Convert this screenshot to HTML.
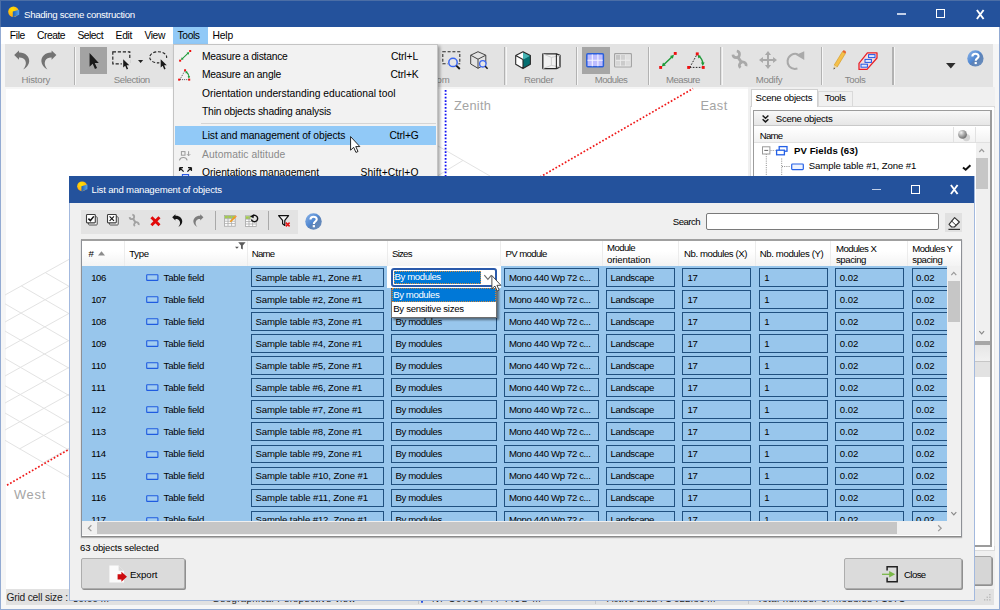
<!DOCTYPE html>
<html>
<head>
<meta charset="utf-8">
<title>Shading scene construction</title>
<style>
*{box-sizing:border-box;margin:0;padding:0}
html,body{width:1000px;height:610px;overflow:hidden;background:#fff}
body{font-family:"Liberation Sans",sans-serif;font-size:9.3px;color:#000;position:relative}
.abs{position:absolute}
.t{position:absolute;white-space:nowrap;line-height:1}
svg{position:absolute;overflow:visible}
.f{position:absolute;height:19px;border:1px solid #20507f}
.rows .t{transform:translateY(0.5px)}
.btn{position:absolute;background:#dbdbdb;border:1px solid #adadad;border-radius:2px;box-shadow:1px 1px 0 #8f8f8f}
</style>
</head>
<body>
<div class="abs" style="left:0px;top:0px;width:1000px;height:610px;background:#f6f6f6;border:1px solid #93abd3"></div>
<div class="abs" style="left:6px;top:89px;width:742px;height:500px;background:#fff;"></div>
<div class="abs" style="left:0px;top:0px;width:1000px;height:27px;background:#24529c;border-top:1px solid #4b6ea6;border-left:1px solid #4b6ea6"></div>
<svg style="left:8.0px;top:6.0px" width="13" height="12" viewBox="0 0 13 12"><defs><radialGradient id="s1" cx="0.4" cy="0.3" r="0.8"><stop offset="0" stop-color="#ffe400"/><stop offset="1" stop-color="#ff9a1c"/></radialGradient><linearGradient id="p2" x1="0" x2="1"><stop offset="0" stop-color="#1d62b6"/><stop offset="1" stop-color="#58a3ea"/></linearGradient></defs><circle cx="5.5" cy="5.7" r="5.3" fill="url(#s1)"/><path d="M4.8 5.6 L11.2 3.8 L11.2 8.8 L4.8 11.2 Z" fill="url(#p2)"/></svg>
<div class="t" style="left:24.0px;top:10.0px;font-size:9.70px;letter-spacing:-0.314px;color:#fff;">Shading scene construction</div>
<div class="abs" style="left:897px;top:13px;width:9px;height:2px;background:#c3d0e8;"></div>
<div class="abs" style="left:936px;top:9px;width:9px;height:9px;background:transparent;border:1px solid #fff"></div>
<svg style="left:975.5px;top:9.5px" width="8.5" height="9" viewBox="0 0 8.5 9"><path d="M0.9 0 L7.6 9 M7.6 0 L0.9 9" stroke="#fff" stroke-width="1.9" fill="none"/></svg>
<div class="abs" style="left:1px;top:27px;width:998px;height:17px;background:#fff;"></div>
<div class="abs" style="left:173px;top:27px;width:34.6px;height:17.2px;background:#91c9f7;"></div>
<div class="t" style="left:9.8px;top:31.0px;font-size:10.30px;letter-spacing:-0.349px;color:#000;">File</div>
<div class="t" style="left:37.0px;top:31.0px;font-size:10.30px;letter-spacing:-0.485px;color:#000;">Create</div>
<div class="t" style="left:77.5px;top:31.0px;font-size:10.30px;letter-spacing:-0.521px;color:#000;">Select</div>
<div class="t" style="left:115.6px;top:31.0px;font-size:10.30px;letter-spacing:-0.287px;color:#000;">Edit</div>
<div class="t" style="left:144.4px;top:31.0px;font-size:10.30px;letter-spacing:-0.385px;color:#000;">View</div>
<div class="t" style="left:177.6px;top:31.0px;font-size:10.30px;letter-spacing:-0.409px;color:#000;">Tools</div>
<div class="t" style="left:212.5px;top:31.0px;font-size:10.30px;letter-spacing:-0.171px;color:#000;">Help</div>
<div class="abs" style="left:5px;top:44px;width:988px;height:42.5px;background:#e3e3e3;"></div>
<svg style="left:13.5px;top:50.0px" width="15.6" height="20" viewBox="0 0 15.6 20"><path d="M0.2 4.9 L5 0.4 L5 2.5 C11 2.2 15.6 6.4 15.2 11.6 C15 14.8 12.6 17.8 9.2 19.6 C11.6 16.6 12.6 13.6 11.4 10.8 C10.2 8.2 7.8 7.3 5 7.4 L5 9.7 Z" fill="#737373"/></svg>
<svg style="left:41.3px;top:50.0px" width="15.6" height="20" viewBox="0 0 15.6 20"><g transform="translate(15.6 0) scale(-1 1)"><path d="M0.2 4.9 L5 0.4 L5 2.5 C11 2.2 15.6 6.4 15.2 11.6 C15 14.8 12.6 17.8 9.2 19.6 C11.6 16.6 12.6 13.6 11.4 10.8 C10.2 8.2 7.8 7.3 5 7.4 L5 9.7 Z" fill="#737373"/></g></svg>
<div class="t" style="left:21.6px;top:75.0px;font-size:9.60px;letter-spacing:-0.210px;color:#858585;">History</div>
<div class="abs" style="left:74px;top:47px;width:1.2px;height:38px;background:#b2b2b2;"></div>
<div class="abs" style="left:75.2px;top:47px;width:1px;height:38px;background:#f6f6f6;"></div>
<div class="abs" style="left:79.7px;top:46.8px;width:27.8px;height:27px;background:#a3a3a3;"></div>
<svg style="left:88.6px;top:52.4px" width="10.4" height="18" viewBox="0 0 11 18"><path d="M0.6 0.6 L0.6 15 L3.9 12 L6.3 17.4 L8.5 16.4 L6.1 11.2 L10.4 11.2 Z" fill="#1a1a1a"/></svg>
<svg style="left:112.0px;top:51.0px" width="19.5" height="19" viewBox="0 0 19.5 19"><rect x="0.8" y="0.8" width="17" height="12" fill="none" stroke="#222" stroke-width="1.15" stroke-dasharray="3.2 1.8"/><rect x="9.8" y="7" width="9" height="12" fill="#e3e3e3"/><path d="M11.2 8.2 L11.2 16.6 L13.2 14.8 L14.7 18.4 L16.1 17.8 L14.6 14.3 L17.3 14.3 Z" fill="#1a1a1a"/></svg>
<svg style="left:137.9px;top:59.5px" width="5.2" height="3" viewBox="0 0 5.2 3"><path d="M0 0 L5.2 0 L2.6 3 Z" fill="#222"/></svg>
<svg style="left:149.0px;top:51.0px" width="19.5" height="19" viewBox="0 0 19.5 19"><ellipse cx="9.2" cy="6.3" rx="8.5" ry="5.6" fill="none" stroke="#222" stroke-width="1.1" stroke-dasharray="3 1.7"/><rect x="10.4" y="7" width="8" height="12" fill="#e3e3e3"/><path d="M11.7 8.2 L11.7 16.6 L13.7 14.8 L15.2 18.4 L16.6 17.8 L15.1 14.3 L17.8 14.3 Z" fill="#1a1a1a"/></svg>
<div class="t" style="left:113.8px;top:75.0px;font-size:9.60px;letter-spacing:-0.388px;color:#858585;">Selection</div>
<div class="t" style="left:425.5px;top:75.0px;font-size:9.60px;letter-spacing:-0.059px;color:#858585;">Zoom</div>
<svg style="left:442.3px;top:51.0px" width="19" height="19" viewBox="0 0 19 19"><rect x="0.8" y="0.8" width="17" height="12" fill="none" stroke="#2a2a2a" stroke-width="1.05" stroke-dasharray="3 1.8"/><circle cx="11" cy="11.4" r="5.6" fill="#e3e3e3"/><circle cx="11" cy="11.4" r="4.2" fill="#e6e6e6" stroke="#3a66f2" stroke-width="1.5"/><path d="M14.3 14.6 L17.8 18" stroke="#1a1a1a" stroke-width="1.9"/></svg>
<svg style="left:470.0px;top:51.0px" width="18" height="18.5" viewBox="0 0 18 18.5"><path d="M8 0.7 L15.8 4.2 L15.8 13 L8 17.3 L0.7 13 L0.7 4.2 Z M0.7 4.2 L8 8.2 L15.8 4.2 M8 8.2 L8 17.3" fill="none" stroke="#444" stroke-width="1"/><circle cx="12.8" cy="12.8" r="3.2" fill="#e6e6e6" stroke="#3a66f2" stroke-width="1.3"/><path d="M15.2 15.3 L17.6 17.8" stroke="#1a1a1a" stroke-width="1.5"/></svg>
<div class="abs" style="left:504.3px;top:47px;width:1.2px;height:38px;background:#b2b2b2;"></div>
<div class="abs" style="left:505.5px;top:47px;width:1px;height:38px;background:#f6f6f6;"></div>
<svg style="left:515.0px;top:51.0px" width="16.2" height="18.4" viewBox="0 0 16.2 18.4"><path d="M8 0.7 L15.4 4.6 L8 8.6 L0.7 4.6 Z" fill="#fff"/><path d="M8 0.7 L15.4 4.6 L15.4 5.2 L8 8.6 Z" fill="#43b0b0"/><path d="M0.7 4.6 L8 8.6 L8 17.6 L0.7 13.2 Z" fill="#fff"/><path d="M8 8.6 L15.4 4.6 L15.4 13.2 L8 17.6 Z" fill="#046e70"/><path d="M8 0.7 L8 8.6 L15.4 4.6 Z" fill="#46b4b4"/><path d="M8 0.7 L15.4 4.6 L15.4 13.2 L8 17.6 L0.7 13.2 L0.7 4.6 Z M0.7 4.6 L8 8.6 L8 17.6" fill="none" stroke="#2a2a2a" stroke-width="1.1" stroke-linejoin="round"/></svg>
<svg style="left:542.0px;top:52.5px" width="19" height="16.4" viewBox="0 0 19 16.4"><path d="M0.8 0.8 L14.4 0.8 L18 2.4 L18 14 L14.4 15.6 L0.8 15.6 Z" fill="#f1f1f1" stroke="#2a2a2a" stroke-width="1.3" stroke-linejoin="round"/><path d="M0.8 0.8 L9.4 4.4 L18 2.6 M9.4 4.4 L9.4 12.4 L0.8 15.6 M9.4 12.4 L18 14" fill="none" stroke="#c9c9c9" stroke-width="0.9"/><path d="M14.4 0.8 L14.4 15.6" stroke="#2a2a2a" stroke-width="1.1"/></svg>
<div class="t" style="left:524.0px;top:75.0px;font-size:9.60px;letter-spacing:-0.364px;color:#858585;">Render</div>
<div class="abs" style="left:576.2px;top:47px;width:1.2px;height:38px;background:#b2b2b2;"></div>
<div class="abs" style="left:577.4px;top:47px;width:1px;height:38px;background:#f6f6f6;"></div>
<div class="abs" style="left:582.3px;top:46.8px;width:27.6px;height:27px;background:#a6a6a6;"></div>
<svg style="left:586.2px;top:53.2px" width="18.2" height="14.8" viewBox="0 0 18.2 14.8"><rect x="0.8" y="0.8" width="16.6" height="13" rx="1" fill="#bdbcff" stroke="#2b5fd9" stroke-width="1.5"/><path d="M6.3 1.5 V13.2 M11.9 1.5 V13.2 M1.5 7.3 H16.7" stroke="#f4f4ff" stroke-width="1.1"/></svg>
<svg style="left:614.3px;top:53.2px" width="18.2" height="14.8" viewBox="0 0 18.2 14.8"><rect x="0.6" y="0.6" width="16.8" height="13.4" rx="0.8" fill="#ececec" stroke="#a3a3a3" stroke-width="1.2"/><rect x="2" y="2" width="4.2" height="4.8" fill="#c4c4c4"/><rect x="7" y="2" width="4.2" height="4.8" fill="#d0d0d0"/><rect x="12" y="2" width="4.2" height="4.8" fill="#e0e0e0"/><rect x="2" y="7.8" width="4.2" height="4.8" fill="#d6d6d6"/><rect x="7" y="7.8" width="4.2" height="4.8" fill="#cbcbcb"/><rect x="12" y="7.8" width="4.2" height="4.8" fill="#dcdcdc"/></svg>
<div class="t" style="left:594.8px;top:75.0px;font-size:9.60px;letter-spacing:-0.540px;color:#858585;">Modules</div>
<div class="abs" style="left:648.2px;top:47px;width:1.2px;height:38px;background:#b2b2b2;"></div>
<div class="abs" style="left:649.4px;top:47px;width:1px;height:38px;background:#f6f6f6;"></div>
<svg style="left:659.0px;top:52.0px" width="18" height="17" viewBox="0 0 18 17"><path d="M4.2 13.2 L13.6 4.2" stroke="#1f9a3a" stroke-width="1.5"/><path d="M2.8 14.6 L4 10.6 L6.8 13.4 Z M15 2.8 L13.8 6.8 L11 4 Z" fill="#1f9a3a"/><rect x="0.2" y="14" width="2.9" height="2.9" fill="#ee1111"/><rect x="14.8" y="0" width="2.9" height="2.9" fill="#ee1111"/></svg>
<svg style="left:687.0px;top:52.0px" width="18" height="17" viewBox="0 0 18 17"><path d="M2.8 15.4 L10 2.4 M2.8 15.4 H16" stroke="#222" stroke-width="1" stroke-dasharray="1.6 1.4" fill="none"/><path d="M11.6 4 C14.6 6.2 15.8 9 15.8 12" stroke="#1f9a3a" stroke-width="1.5" fill="none"/><path d="M10.6 2.8 L14 4 L11.4 6.6 Z M14 10.6 L17.6 10.6 L15.8 14 Z" fill="#1f9a3a"/><rect x="8.8" y="0.4" width="2.9" height="2.9" fill="#ee1111"/><rect x="0.2" y="14" width="2.9" height="2.9" fill="#ee1111"/><rect x="14.8" y="14" width="2.9" height="2.9" fill="#ee1111"/></svg>
<div class="t" style="left:666.0px;top:75.0px;font-size:9.60px;letter-spacing:-0.507px;color:#858585;">Measure</div>
<div class="abs" style="left:720.3px;top:47px;width:1.2px;height:38px;background:#b2b2b2;"></div>
<div class="abs" style="left:721.5px;top:47px;width:1px;height:38px;background:#f6f6f6;"></div>
<svg style="left:731.8px;top:50.0px" width="15.7" height="20.2" viewBox="0 0 16 20.4"><g fill="none" stroke="#a9a9a9" stroke-linecap="butt"><path d="M0.9 4.6 A3.4 3.4 0 1 0 4.9 0.9" stroke-width="2.7"/><path d="M5.6 6.6 L10.4 13.4" stroke-width="3"/><path d="M8.65 18.05 A3.4 3.4 0 1 1 14.3 16.4" stroke-width="2.7"/></g></svg>
<svg style="left:758.8px;top:51.3px" width="18" height="18" viewBox="0 0 20 20"><path d="M10 0 L13.4 4.4 L11.1 4.4 L11.1 8.9 L15.6 8.9 L15.6 6.6 L20 10 L15.6 13.4 L15.6 11.1 L11.1 11.1 L11.1 15.6 L13.4 15.6 L10 20 L6.6 15.6 L8.9 15.6 L8.9 11.1 L4.4 11.1 L4.4 13.4 L0 10 L4.4 6.6 L4.4 8.9 L8.9 8.9 L8.9 4.4 L6.6 4.4 Z" fill="#a9a9a9"/></svg>
<svg style="left:785.8px;top:50.5px" width="19.5" height="19" viewBox="0 0 20 20.5"><path d="M12.4 3.6 C7.6 1.8 2 4.8 1.2 10.4 C0.6 15.2 4 19.2 9 19.4 C10 19.4 11 19.2 11.8 19" stroke="#a9a9a9" stroke-width="2.2" fill="none"/><path d="M10.2 4.2 L19.2 0.4 L19.2 9.6 Z" fill="#a9a9a9"/></svg>
<div class="t" style="left:755.8px;top:75.0px;font-size:9.60px;letter-spacing:-0.296px;color:#858585;">Modify</div>
<div class="abs" style="left:820.5px;top:47px;width:1.2px;height:38px;background:#b2b2b2;"></div>
<div class="abs" style="left:821.7px;top:47px;width:1px;height:38px;background:#f6f6f6;"></div>
<svg style="left:832.5px;top:50.0px" width="13.5" height="20" viewBox="0 0 14.4 21"><path d="M10 1.6 L13.2 3.6 L4.4 18 L1.2 16 Z" fill="#f5c04a" stroke="#d59a22" stroke-width="0.7"/><path d="M10 1.6 L10.9 0.3 C11.6 -0.3 13.6 0.8 14 2.2 L13.2 3.6 Z" fill="#e9652d"/><path d="M1.2 16 L4.4 18 L0.6 20.6 Z" fill="#e8d5a8"/><path d="M0.6 20.6 L0.9 18.4 L2.3 19.4 Z" fill="#333"/></svg>
<svg style="left:857.8px;top:51.7px" width="20" height="18.4" viewBox="0 0 20 18.4"><path d="M9.4 0.8 L19 0.8 L19 6 L9 17.4 L1 17.4 L1 11.4 Z" fill="#f4dede" stroke="#e8202a" stroke-width="1.3" stroke-linejoin="round"/><rect x="10.6" y="2.6" width="6.4" height="3" fill="#dfe8ff" stroke="#2455e4" stroke-width="1"/><rect x="7" y="7.4" width="6.4" height="3" fill="#dfe8ff" stroke="#2455e4" stroke-width="1"/><rect x="3" y="12.2" width="6.4" height="3" fill="#dfe8ff" stroke="#2455e4" stroke-width="1"/></svg>
<div class="t" style="left:844.8px;top:75.0px;font-size:9.60px;letter-spacing:-0.362px;color:#858585;">Tools</div>
<div class="abs" style="left:892.4px;top:47px;width:1.2px;height:38px;background:#b2b2b2;"></div>
<div class="abs" style="left:893.6px;top:47px;width:1px;height:38px;background:#f6f6f6;"></div>
<svg style="left:945.5px;top:63.4px" width="9.6" height="5.4" viewBox="0 0 9.6 5.4"><path d="M0 0 L9.6 0 L4.8 5.4 Z" fill="#2d2d2d"/></svg>
<svg style="left:967.2px;top:50.0px" width="16.8" height="16.8" viewBox="0 0 20 20"><defs><linearGradient id="h3" x1="0" y1="0" x2="1" y2="1"><stop offset="0" stop-color="#8db5e8"/><stop offset="0.5" stop-color="#4f86d0"/><stop offset="0.52" stop-color="#5b82b8"/><stop offset="1" stop-color="#6c8fbe"/></linearGradient></defs><circle cx="10" cy="10" r="9.7" fill="url(#h3)"/><path d="M6.4 7.6 C6.4 3.4 13.8 3.4 13.8 7.4 C13.8 10 10.4 10 10.4 12.8" stroke="#fff" stroke-width="2.5" fill="none"/><rect x="9.1" y="14.2" width="2.6" height="2.6" fill="#fff"/></svg>
<svg style="left:0;top:0" width="1000" height="610" viewBox="0 0 1000 610"><line x1="5.0" y1="295.0" x2="69.0" y2="259.4" stroke="#e3e3e3" stroke-width="1"/><line x1="5.0" y1="322.0" x2="69.0" y2="286.4" stroke="#e3e3e3" stroke-width="1"/><line x1="5.0" y1="349.0" x2="69.0" y2="313.4" stroke="#e3e3e3" stroke-width="1"/><line x1="5.0" y1="376.0" x2="69.0" y2="340.4" stroke="#e3e3e3" stroke-width="1"/><line x1="5.0" y1="403.0" x2="69.0" y2="367.4" stroke="#e3e3e3" stroke-width="1"/><line x1="5.0" y1="430.0" x2="69.0" y2="394.4" stroke="#e3e3e3" stroke-width="1"/><line x1="19.7" y1="448.8" x2="69.0" y2="421.4" stroke="#e3e3e3" stroke-width="1"/><line x1="43.5" y1="462.6" x2="69.0" y2="448.4" stroke="#e3e3e3" stroke-width="1"/><line x1="67.2" y1="476.4" x2="69.0" y2="475.4" stroke="#e3e3e3" stroke-width="1"/><line x1="45.3" y1="272.6" x2="69.0" y2="286.3" stroke="#e3e3e3" stroke-width="1"/><line x1="21.3" y1="285.9" x2="69.0" y2="313.6" stroke="#e3e3e3" stroke-width="1"/><line x1="5.0" y1="303.8" x2="69.0" y2="340.9" stroke="#e3e3e3" stroke-width="1"/><line x1="5.0" y1="331.1" x2="69.0" y2="368.2" stroke="#e3e3e3" stroke-width="1"/><line x1="5.0" y1="358.4" x2="69.0" y2="395.5" stroke="#e3e3e3" stroke-width="1"/><line x1="5.0" y1="385.7" x2="69.0" y2="422.8" stroke="#e3e3e3" stroke-width="1"/><line x1="5.0" y1="413.0" x2="69.0" y2="450.1" stroke="#e3e3e3" stroke-width="1"/><line x1="5.0" y1="440.3" x2="69.0" y2="477.4" stroke="#e3e3e3" stroke-width="1"/><line x1="438" y1="146" x2="490" y2="176" stroke="#e3e3e3"/><line x1="437" y1="176.2" x2="463" y2="160.4" stroke="#e3e3e3"/><line x1="7" y1="485.2" x2="693" y2="88.6" stroke="#f01818" stroke-width="1.7" stroke-dasharray="1.7 1.9"/><line x1="445.6" y1="90" x2="445.6" y2="176" stroke="#1212f4" stroke-width="1.8" stroke-dasharray="1.7 1.7"/></svg>
<div class="t" style="left:454.0px;top:100.0px;font-size:12.80px;letter-spacing:0.271px;color:#a4a4a4;">Zenith</div>
<div class="t" style="left:700.4px;top:100.0px;font-size:12.80px;letter-spacing:0.397px;color:#a4a4a4;">East</div>
<div class="t" style="left:14.0px;top:489.0px;font-size:12.80px;letter-spacing:0.769px;color:#a4a4a4;">West</div>
<div class="abs" style="left:748px;top:87px;width:247px;height:502px;background:#f0f0f0;"></div>
<div class="abs" style="left:749.5px;top:105.5px;width:245.5px;height:445px;background:#fff;border:1px solid #dadada"></div>
<div class="abs" style="left:817.5px;top:91px;width:35.5px;height:15px;background:#f0f0f0;border:1px solid #d9d9d9;border-bottom:none"></div>
<div class="abs" style="left:751px;top:89px;width:66.8px;height:17.5px;background:#fff;border:1px solid #d0d0d0;border-bottom:none"></div>
<div class="t" style="left:755.6px;top:93.0px;font-size:9.60px;letter-spacing:-0.277px;color:#000;">Scene objects</div>
<div class="t" style="left:824.7px;top:93.0px;font-size:9.60px;letter-spacing:-0.342px;color:#000;">Tools</div>
<div class="abs" style="left:753px;top:110px;width:238.5px;height:437px;background:#fff;border:1px solid #9c9c9c;border-right:2px solid #9c9c9c;border-bottom:2px solid #9c9c9c"></div>
<div class="abs" style="left:754px;top:111px;width:235.5px;height:15px;background:linear-gradient(#f8f8f8,#e6e6e6);border-bottom:1px solid #c9c9c9"></div>
<svg style="left:761.5px;top:115.3px" width="7" height="7.6" viewBox="0 0 7 7.6"><path d="M0.6 0.5 L3.5 3.2 L6.4 0.5 M0.6 4.2 L3.5 6.9 L6.4 4.2" stroke="#1a1a1a" stroke-width="1.5" fill="none"/></svg>
<div class="t" style="left:775.8px;top:114.0px;font-size:9.60px;letter-spacing:-0.277px;color:#000;">Scene objects</div>
<div class="abs" style="left:754px;top:126.5px;width:235.5px;height:16.5px;background:linear-gradient(#ffffff,#f2f2f2);border-bottom:1px solid #e0e0e0"></div>
<div class="abs" style="left:953px;top:127px;width:1px;height:15px;background:#e2e2e2;"></div>
<div class="abs" style="left:975px;top:127px;width:1px;height:15px;background:#e2e2e2;"></div>
<div class="t" style="left:759.8px;top:131.0px;font-size:9.60px;letter-spacing:-0.752px;color:#000;">Name</div>
<svg style="left:958.1px;top:129.7px" width="12.2" height="11.4" viewBox="0 0 12.2 11.4"><defs><radialGradient id="sp4" cx="0.35" cy="0.3" r="0.75"><stop offset="0" stop-color="#f2f2f2"/><stop offset="0.55" stop-color="#a2a2a2"/><stop offset="1" stop-color="#6a6a6a"/></radialGradient></defs><circle cx="8.4" cy="7.6" r="3.7" fill="#d4d4d4"/><circle cx="4.5" cy="4.4" r="4.4" fill="url(#sp4)"/></svg>
<svg style="left:0;top:0" width="1000" height="200" viewBox="0 0 1000 200"><g stroke="#8c8c8c" stroke-width="1" stroke-dasharray="1 1.2" fill="none"><line x1="766.3" y1="154" x2="766.3" y2="176"/><line x1="770.5" y1="150.5" x2="775.5" y2="150.5"/><line x1="781.7" y1="158.5" x2="781.7" y2="176"/><line x1="782" y1="166.5" x2="790" y2="166.5"/></g><rect x="762.5" y="146.8" width="7.4" height="7.2" fill="#fff" stroke="#9a9a9a" stroke-width="1"/><line x1="764.3" y1="150.4" x2="768.2" y2="150.4" stroke="#666" stroke-width="1"/><rect x="779.2" y="146.6" width="7.8" height="4.6" fill="#fff" stroke="#2460e6" stroke-width="1.3"/><rect x="776.6" y="150.2" width="7.8" height="4.6" fill="#fff" stroke="#2460e6" stroke-width="1.3"/><rect x="791.7" y="164" width="11.6" height="5.6" rx="0.8" fill="#eef3ff" stroke="#2460e6" stroke-width="1.2"/><path d="M963 167.5 L965.7 169.7 L970.4 165.2" stroke="#111" stroke-width="2" fill="none"/></svg>
<div class="t" style="left:794.0px;top:146.0px;font-size:9.60px;letter-spacing:0.075px;color:#000;font-weight:bold;">PV Fields (63)</div>
<div class="t" style="left:808.8px;top:161.0px;font-size:9.60px;letter-spacing:-0.101px;color:#000;">Sample table #1, Zone #1</div>
<div class="abs" style="left:975.5px;top:142.5px;width:14px;height:198.5px;background:#f0f0f0;"></div>
<svg style="left:979.3px;top:149.3px" width="5.4" height="3.5" viewBox="0 0 5.4 3.5"><path d="M0.3 3 L2.7 0.4 L5.1 3" stroke="#9a9a9a" stroke-width="1.2" fill="none"/></svg>
<div class="abs" style="left:976.3px;top:158.3px;width:12px;height:31.2px;background:#c6c6c6;"></div>
<svg style="left:979.3px;top:331.0px" width="5.4" height="3.5" viewBox="0 0 5.4 3.5"><path d="M0.3 0.2 L2.7 2.8 L5.1 0.2" stroke="#8a8a8a" stroke-width="1.2" fill="none"/></svg>
<div class="abs" style="left:975px;top:341px;width:14.5px;height:4px;background:#a6a6a6;"></div>
<div class="abs" style="left:975px;top:345px;width:14.5px;height:15.5px;background:linear-gradient(#e6e6e6,#f1f1f1);"></div>
<div class="abs" style="left:975px;top:360.5px;width:14.5px;height:1.5px;background:#c6c6c6;"></div>
<div class="abs" style="left:975px;top:362px;width:14.5px;height:15px;background:#e2e2e2;"></div>
<div class="abs" style="left:994px;top:108px;width:1px;height:438px;background:#e9e9e9;"></div>
<div class="abs" style="left:972px;top:555.5px;width:19.6px;height:29px;background:#d6d6d6;border:1px solid #a5a5a5;border-radius:2px;box-shadow:1px 1px 0 #8f8f8f"></div>
<div class="abs" style="left:6px;top:589px;width:988px;height:16px;background:#e1e1e1;"></div>
<div class="t" style="left:6.4px;top:593.0px;font-size:10.20px;letter-spacing:-0.159px;color:#222;">Grid cell size :</div>
<div class="t" style="left:73.0px;top:594.0px;font-size:9.60px;letter-spacing:0.188px;color:#222;">50.00 m</div>
<div class="t" style="left:212.0px;top:594.0px;font-size:9.60px;letter-spacing:0.415px;color:#222;">Geographical   Perspective view</div>
<div class="abs" style="left:418px;top:590px;width:1px;height:14px;background:#c8c8c8;"></div>
<div class="t" style="left:432.0px;top:594.0px;font-size:9.60px;letter-spacing:1.446px;color:#222;">Nr 10.00, Y: 7.92 m</div>
<div class="abs" style="left:595px;top:590px;width:1px;height:14px;background:#c8c8c8;"></div>
<div class="t" style="left:607.0px;top:594.0px;font-size:9.60px;letter-spacing:0.190px;color:#222;">Active area : 1 022.86 m²</div>
<div class="abs" style="left:748px;top:590px;width:1px;height:14px;background:#c8c8c8;"></div>
<div class="t" style="left:757.0px;top:594.0px;font-size:9.60px;letter-spacing:0.451px;color:#222;">Total number of modules : 1071</div>
<svg style="left:984.0px;top:594.0px" width="8" height="8" viewBox="0 0 8 8"><rect x="5.2" y="0" width="1.3" height="1.3" fill="#b5b5b5"/><rect x="2.6" y="2.6" width="1.3" height="1.3" fill="#b5b5b5"/><rect x="5.2" y="2.6" width="1.3" height="1.3" fill="#b5b5b5"/><rect x="0" y="5.2" width="1.3" height="1.3" fill="#b5b5b5"/><rect x="2.6" y="5.2" width="1.3" height="1.3" fill="#b5b5b5"/><rect x="5.2" y="5.2" width="1.3" height="1.3" fill="#b5b5b5"/></svg>
<div class="abs" style="left:420.5px;top:600px;width:2.5px;height:2.5px;background:#2a50e0;border-radius:2px"></div>
<div class="abs" style="left:173px;top:44px;width:265px;height:140px;background:#f2f2f2;border:1px solid #c4c4c4;box-shadow:2px 2px 3px rgba(0,0,0,.35)"></div>
<div class="abs" style="left:175.3px;top:126.2px;width:260.9px;height:18.4px;background:#91c9f7;"></div>
<div class="abs" style="left:200.5px;top:122.5px;width:235.5px;height:1px;background:#d5d5d5;"></div>
<div class="t" style="left:202.0px;top:52.0px;font-size:10.30px;letter-spacing:-0.238px;color:#000;">Measure a distance</div>
<div class="t" style="left:391.0px;top:52.0px;font-size:10.30px;letter-spacing:-0.127px;color:#000;">Ctrl+L</div>
<div class="t" style="left:202.0px;top:70.0px;font-size:10.30px;letter-spacing:-0.216px;color:#000;">Measure an angle</div>
<div class="t" style="left:390.4px;top:70.0px;font-size:10.30px;letter-spacing:-0.117px;color:#000;">Ctrl+K</div>
<div class="t" style="left:202.0px;top:89.0px;font-size:10.30px;letter-spacing:-0.001px;color:#000;">Orientation understanding educational tool</div>
<div class="t" style="left:202.0px;top:107.0px;font-size:10.30px;letter-spacing:-0.191px;color:#000;">Thin objects shading analysis</div>
<div class="t" style="left:202.0px;top:131.0px;font-size:10.30px;letter-spacing:-0.086px;color:#000;">List and management of objects</div>
<div class="t" style="left:389.5px;top:131.0px;font-size:10.30px;letter-spacing:-0.158px;color:#000;">Ctrl+G</div>
<div class="t" style="left:202.0px;top:150.0px;font-size:10.30px;letter-spacing:0.085px;color:#8a8a8a;">Automatic altitude</div>
<div class="t" style="left:202.0px;top:168.0px;font-size:10.30px;letter-spacing:-0.065px;color:#000;">Orientations management</div>
<div class="t" style="left:360.4px;top:168.0px;font-size:10.30px;letter-spacing:0.127px;color:#000;">Shift+Ctrl+O</div>
<svg style="left:178.6px;top:49.8px" width="12.42" height="11.73" viewBox="0 0 18 17"><path d="M4.2 13.2 L13.6 4.2" stroke="#1f9a3a" stroke-width="1.5"/><path d="M2.8 14.6 L4 10.6 L6.8 13.4 Z M15 2.8 L13.8 6.8 L11 4 Z" fill="#1f9a3a"/><rect x="0.2" y="14" width="2.9" height="2.9" fill="#ee1111"/><rect x="14.8" y="0" width="2.9" height="2.9" fill="#ee1111"/></svg>
<svg style="left:178.4px;top:69.3px" width="12.42" height="11.73" viewBox="0 0 18 17"><path d="M2.8 15.4 L10 2.4 M2.8 15.4 H16" stroke="#222" stroke-width="1" stroke-dasharray="1.6 1.4" fill="none"/><path d="M11.6 4 C14.6 6.2 15.8 9 15.8 12" stroke="#1f9a3a" stroke-width="1.5" fill="none"/><path d="M10.6 2.8 L14 4 L11.4 6.6 Z M14 10.6 L17.6 10.6 L15.8 14 Z" fill="#1f9a3a"/><rect x="8.8" y="0.4" width="2.9" height="2.9" fill="#ee1111"/><rect x="0.2" y="14" width="2.9" height="2.9" fill="#ee1111"/><rect x="14.8" y="14" width="2.9" height="2.9" fill="#ee1111"/></svg>
<svg style="left:178.5px;top:150.5px" width="13" height="10.5" viewBox="0 0 13 10.5"><rect x="2.4" y="0.6" width="3.6" height="3.6" fill="none" stroke="#9a9a9a" stroke-width="1"/><path d="M0.4 9.4 C1.6 5.6 7 5.6 8.2 9.4" fill="none" stroke="#9a9a9a" stroke-width="1.1"/><path d="M9.6 0.2 V4.6 M8 3.2 L9.6 4.8 L11.2 3.2" stroke="#9a9a9a" stroke-width="1" fill="none"/></svg>
<svg style="left:178.5px;top:166.5px" width="13" height="11" viewBox="0 0 13 11"><path d="M0.6 0.6 H4 M0.6 0.6 V4 M0.8 0.8 L4.6 4.6 M12.4 0.6 H9 M12.4 0.6 V4 M12.2 0.8 L8.4 4.6" stroke="#1a1a1a" stroke-width="1.3" fill="none"/><rect x="3.4" y="7.6" width="6.2" height="3.4" fill="#dfe8ff" stroke="#2455e4" stroke-width="1.1"/></svg>
<svg style="left:349.7px;top:136.0px" width="10.4" height="17" viewBox="0 0 11 18"><path d="M0.6 0.6 L0.6 15 L3.9 12 L6.3 17.4 L8.5 16.4 L6.1 11.2 L10.4 11.2 Z" fill="#fff" stroke="#111" stroke-width="0.95" stroke-linejoin="miter"/></svg>
<div class="abs" style="left:69px;top:176px;width:906px;height:424.6px;background:#f0f0f0;border:1px solid #a3b9de"></div>
<div class="abs" style="left:69px;top:176px;width:905.2px;height:26.5px;background:#24529c;"></div>
<svg style="left:77.3px;top:181.4px" width="12.09" height="11.16" viewBox="0 0 13 12"><defs><radialGradient id="s5" cx="0.4" cy="0.3" r="0.8"><stop offset="0" stop-color="#ffe400"/><stop offset="1" stop-color="#ff9a1c"/></radialGradient><linearGradient id="p6" x1="0" x2="1"><stop offset="0" stop-color="#1d62b6"/><stop offset="1" stop-color="#58a3ea"/></linearGradient></defs><circle cx="5.5" cy="5.7" r="5.3" fill="url(#s5)"/><path d="M4.8 5.6 L11.2 3.8 L11.2 8.8 L4.8 11.2 Z" fill="url(#p6)"/></svg>
<div class="t" style="left:91.5px;top:185.0px;font-size:9.60px;letter-spacing:-0.186px;color:#fff;">List and management of objects</div>
<div class="abs" style="left:872px;top:188.5px;width:9px;height:1.6px;background:#c3d0e8;"></div>
<div class="abs" style="left:911px;top:185px;width:9px;height:9px;background:transparent;border:1px solid #fff"></div>
<svg style="left:950.3px;top:185.2px" width="8.5" height="9" viewBox="0 0 8.5 9"><path d="M0.9 0 L7.6 9 M7.6 0 L0.9 9" stroke="#fff" stroke-width="1.9" fill="none"/></svg>
<div class="abs" style="left:81.3px;top:209.5px;width:216.7px;height:24.3px;background:#e3e3e3;"></div>
<svg style="left:85.9px;top:214.3px" width="12" height="11.6" viewBox="0 0 12 11.6"><rect x="2.6" y="2.8" width="8.6" height="8.2" rx="0.8" fill="#fff" stroke="#4a4a4a" stroke-width="1"/><rect x="0.5" y="0.5" width="8.8" height="8.4" rx="0.8" fill="#fff" stroke="#3c3c3c" stroke-width="1.1"/><path d="M2.4 4.6 L4.4 6.6 L7.8 2.4" stroke="#111" stroke-width="1.5" fill="none"/></svg>
<svg style="left:107.3px;top:214.3px" width="12" height="11.6" viewBox="0 0 12 11.6"><rect x="2.6" y="2.8" width="8.6" height="8.2" rx="0.8" fill="#fff" stroke="#4a4a4a" stroke-width="1"/><rect x="0.5" y="0.5" width="8.8" height="8.4" rx="0.8" fill="#fff" stroke="#3c3c3c" stroke-width="1.1"/><path d="M2.6 2.4 L7 6.8 M7 2.4 L2.6 6.8" stroke="#111" stroke-width="1.1" fill="none"/></svg>
<svg style="left:129.3px;top:213.8px" width="10.8" height="13.7" viewBox="0 0 16 20.4"><g fill="none" stroke="#a2a2a2" stroke-linecap="butt"><path d="M0.9 4.6 A3.4 3.4 0 1 0 4.9 0.9" stroke-width="2.7"/><path d="M5.6 6.6 L10.4 13.4" stroke-width="3"/><path d="M8.65 18.05 A3.4 3.4 0 1 1 14.3 16.4" stroke-width="2.7"/></g></svg>
<svg style="left:150.4px;top:215.7px" width="10.9" height="10.4" viewBox="0 0 11 10.6"><path d="M1.4 1.2 L9.6 9.4 M9.6 1.2 L1.4 9.4" stroke="#e20a0a" stroke-width="3" fill="none"/></svg>
<svg style="left:172.0px;top:214.0px" width="10.6" height="13.4" viewBox="0 0 15.6 20"><path d="M0.2 4.9 L5 0.4 L5 2.5 C11 2.2 15.6 6.4 15.2 11.6 C15 14.8 12.6 17.8 9.2 19.6 C11.6 16.6 12.6 13.6 11.4 10.8 C10.2 8.2 7.8 7.3 5 7.4 L5 9.7 Z" fill="#151515"/></svg>
<svg style="left:192.6px;top:214.0px" width="10.7" height="13.4" viewBox="0 0 15.6 20"><g transform="translate(15.6 0) scale(-1 1)"><path d="M0.2 4.9 L5 0.4 L5 2.5 C11 2.2 15.6 6.4 15.2 11.6 C15 14.8 12.6 17.8 9.2 19.6 C11.6 16.6 12.6 13.6 11.4 10.8 C10.2 8.2 7.8 7.3 5 7.4 L5 9.7 Z" fill="#7c7c7c"/></g></svg>
<div class="abs" style="left:215px;top:211px;width:1.2px;height:18.6px;background:#a9a9a9;"></div>
<svg style="left:224.2px;top:214.7px" width="13" height="11.8" viewBox="0 0 13 11.8"><rect x="0.4" y="0.4" width="10.8" height="10.8" fill="#fff" stroke="#a5a5a5" stroke-width="0.8"/><rect x="0.8" y="0.8" width="10" height="2.8" fill="#a4cf4a"/><path d="M0.8 3.8 H11 M0.8 6.2 H11 M0.8 8.6 H11 M4 0.8 V11 M7.6 0.8 V11" stroke="#a8a8a8" stroke-width="0.8"/><path d="M11.6 0.2 L12.8 1.4 L7.4 6.8 L5.8 7.4 L6.4 5.6 Z" fill="#f39a1e"/><path d="M11.6 0.2 L12.8 1.4 L12.2 2 L11 0.8Z" fill="#f0a0a0"/></svg>
<svg style="left:245.3px;top:213.5px" width="13.6" height="13.2" viewBox="0 0 13.6 13.2"><g transform="translate(0 1.4)"><rect x="0.4" y="0.4" width="10.8" height="10.8" fill="#fff" stroke="#a5a5a5" stroke-width="0.8"/><rect x="0.8" y="0.8" width="10" height="2.8" fill="#a4cf4a"/><path d="M0.8 3.8 H11 M0.8 6.2 H11 M0.8 8.6 H11 M4 0.8 V11 M7.6 0.8 V11" stroke="#a8a8a8" stroke-width="0.8"/></g><circle cx="9.4" cy="4.4" r="3.9" fill="#e3e3e3"/><path d="M6.4 5.6 A3.2 3.2 0 1 0 7.6 1.9" stroke="#111" stroke-width="1.4" fill="none"/><path d="M5 2.6 L8.8 0.2 L8.6 4.2 Z" fill="#111"/></svg>
<div class="abs" style="left:267.9px;top:211px;width:1.2px;height:18.6px;background:#a9a9a9;"></div>
<svg style="left:277.8px;top:215.2px" width="12.2" height="12" viewBox="0 0 12.2 12"><path d="M0.6 0.7 H10.6 L6.8 5.4 V10.4 L4.6 8.8 V5.4 Z" fill="#f4f4f4" stroke="#111" stroke-width="1.2" stroke-linejoin="round"/><path d="M7.8 7.6 L11.6 11.4 M11.6 7.6 L7.8 11.4" stroke="#e81414" stroke-width="1.5"/></svg>
<svg style="left:305.0px;top:213.0px" width="17" height="17" viewBox="0 0 20 20"><defs><linearGradient id="h7" x1="0" y1="0" x2="1" y2="1"><stop offset="0" stop-color="#8db5e8"/><stop offset="0.5" stop-color="#4f86d0"/><stop offset="0.52" stop-color="#5b82b8"/><stop offset="1" stop-color="#6c8fbe"/></linearGradient></defs><circle cx="10" cy="10" r="9.7" fill="url(#h7)"/><path d="M6.4 7.6 C6.4 3.4 13.8 3.4 13.8 7.4 C13.8 10 10.4 10 10.4 12.8" stroke="#fff" stroke-width="2.5" fill="none"/><rect x="9.1" y="14.2" width="2.6" height="2.6" fill="#fff"/></svg>
<div class="t" style="left:672.8px;top:217.0px;font-size:9.60px;letter-spacing:-0.536px;color:#000;">Search</div>
<div class="abs" style="left:706.4px;top:213.4px;width:232.6px;height:17px;background:#fff;border:1px solid #7a7a7a;border-radius:2px"></div>
<div class="abs" style="left:945.4px;top:213.4px;width:17px;height:18.6px;background:#e1e1e1;"></div>
<svg style="left:948.0px;top:216.5px" width="12.4" height="13.2" viewBox="0 0 12.4 13.2"><path d="M6.6 0.6 L11.4 5 L6.4 10 L3.6 10 L1 7.4 Z" fill="#fff" stroke="#333" stroke-width="1.1" stroke-linejoin="round"/><path d="M3.6 4 L8.2 8.4" stroke="#333" stroke-width="1"/><path d="M0.4 12.4 H12" stroke="#333" stroke-width="1.2"/></svg>
<div class="abs" style="left:81px;top:239px;width:881px;height:297.5px;background:#fff;border:1px solid #8d9096;border-top:2px solid #a0a0a0;border-bottom:1.5px solid #8a8a8a;box-shadow:0 1px 1px rgba(0,0,0,.25)"></div>
<div class="abs" style="left:82px;top:241px;width:879px;height:25px;background:linear-gradient(#ffffff 40%,#f3f3f3);"></div>
<div class="abs" style="left:124px;top:241px;width:1px;height:25px;background:#ececec;"></div>
<div class="abs" style="left:246.7px;top:241px;width:1px;height:25px;background:#ececec;"></div>
<div class="abs" style="left:386.7px;top:241px;width:1px;height:25px;background:#ececec;"></div>
<div class="abs" style="left:500.1px;top:241px;width:1px;height:25px;background:#ececec;"></div>
<div class="abs" style="left:602.3px;top:241px;width:1px;height:25px;background:#ececec;"></div>
<div class="abs" style="left:678.1px;top:241px;width:1px;height:25px;background:#ececec;"></div>
<div class="abs" style="left:754.5px;top:241px;width:1px;height:25px;background:#ececec;"></div>
<div class="abs" style="left:830.3px;top:241px;width:1px;height:25px;background:#ececec;"></div>
<div class="abs" style="left:906.8px;top:241px;width:1px;height:25px;background:#ececec;"></div>
<div class="t" style="left:88.4px;top:249.0px;font-size:9.60px;letter-spacing:0.062px;color:#000;">#</div>
<svg style="left:98.3px;top:251.3px" width="7" height="4.6" viewBox="0 0 7 4.6"><path d="M0 4.4 L3.5 0.3 L7 4.4 Z" fill="#8c8c8c"/></svg>
<div class="t" style="left:129.2px;top:249.0px;font-size:9.60px;letter-spacing:-0.303px;color:#000;">Type</div>
<svg style="left:234.6px;top:242.4px" width="10.8" height="7.8" viewBox="0 0 10.8 7.8"><path d="M3.2 0.2 H10.6 L7.8 3.5 V7.6 L6 6.6 V3.5 Z" fill="#5c5c5c"/><path d="M0 4.8 H3.8 L1.9 6.8 Z" fill="#555"/></svg>
<div class="t" style="left:251.8px;top:249.0px;font-size:9.60px;letter-spacing:-0.802px;color:#000;">Name</div>
<div class="t" style="left:392.0px;top:249.0px;font-size:9.60px;letter-spacing:-0.755px;color:#000;">Sizes</div>
<div class="t" style="left:505.6px;top:249.0px;font-size:9.60px;letter-spacing:-0.640px;color:#000;">PV module</div>
<div class="t" style="left:607.0px;top:243.0px;font-size:9.60px;letter-spacing:-0.581px;color:#000;">Module</div>
<div class="t" style="left:607.0px;top:255.0px;font-size:9.60px;letter-spacing:-0.130px;color:#000;">orientation</div>
<div class="t" style="left:684.0px;top:249.0px;font-size:9.60px;letter-spacing:-0.424px;color:#000;">Nb. modules (X)</div>
<div class="t" style="left:759.7px;top:249.0px;font-size:9.60px;letter-spacing:-0.370px;color:#000;">Nb. modules (Y)</div>
<div class="t" style="left:836.0px;top:244.0px;font-size:9.60px;letter-spacing:-0.562px;color:#000;">Modules X</div>
<div class="t" style="left:836.0px;top:255.0px;font-size:9.60px;letter-spacing:-0.441px;color:#000;">spacing</div>
<div class="t" style="left:912.3px;top:244.0px;font-size:9.60px;letter-spacing:-0.564px;color:#000;">Modules Y</div>
<div class="t" style="left:912.3px;top:255.0px;font-size:9.60px;letter-spacing:-0.441px;color:#000;">spacing</div>
<div class="abs rows" style="left:82px;top:266px;width:865px;height:255px;overflow:hidden;background:#98c6ec">
<div class="t" style="left:9.2px;top:6.0px;font-size:9.60px;letter-spacing:-0.405px;color:#000;">106</div>
<svg style="left:63.8px;top:8.3px" width="13" height="8" viewBox="0 0 13 8"><rect x="0.7" y="0.8" width="11.2" height="5.6" rx="0.5" fill="#a3cdf0" stroke="#1f5be0" stroke-width="1.1"/></svg>
<div class="t" style="left:81.6px;top:6.0px;font-size:9.60px;letter-spacing:-0.257px;color:#000;">Table field</div>
<div class="f" style="left:169.2px;top:2.3px;width:132.4px;height:18.6px"></div>
<div class="t" style="left:173.4px;top:6.0px;font-size:9.60px;letter-spacing:-0.122px;color:#000;">Sample table #1, Zone #1</div>
<div class="f" style="left:422.0px;top:2.3px;width:94.8px;height:18.6px"></div>
<div class="t" style="left:427.0px;top:6.0px;font-size:9.60px;letter-spacing:-0.372px;color:#000;">Mono 440 Wp 72 c...</div>
<div class="f" style="left:524.2px;top:2.3px;width:69.0px;height:18.6px"></div>
<div class="t" style="left:528.6px;top:6.0px;font-size:9.60px;letter-spacing:-0.397px;color:#000;">Landscape</div>
<div class="f" style="left:600.0px;top:2.3px;width:69.4px;height:18.6px"></div>
<div class="t" style="left:605.6px;top:6.0px;font-size:9.60px;letter-spacing:-0.538px;color:#000;">17</div>
<div class="f" style="left:676.7px;top:2.3px;width:69.1px;height:18.6px"></div>
<div class="t" style="left:682.2px;top:6.0px;font-size:9.60px;color:#000;">1</div>
<div class="f" style="left:753.3px;top:2.3px;width:68.9px;height:18.6px"></div>
<div class="t" style="left:757.8px;top:6.0px;font-size:9.60px;letter-spacing:-0.021px;color:#000;">0.02</div>
<div class="f" style="left:829.6px;top:2.3px;width:68.4px;height:18.6px"></div>
<div class="t" style="left:834.0px;top:6.0px;font-size:9.60px;letter-spacing:-0.021px;color:#000;">0.02</div>
<div class="t" style="left:9.2px;top:28.0px;font-size:9.60px;letter-spacing:-0.405px;color:#000;">107</div>
<svg style="left:63.8px;top:30.3px" width="13" height="8" viewBox="0 0 13 8"><rect x="0.7" y="0.8" width="11.2" height="5.6" rx="0.5" fill="#a3cdf0" stroke="#1f5be0" stroke-width="1.1"/></svg>
<div class="t" style="left:81.6px;top:28.0px;font-size:9.60px;letter-spacing:-0.257px;color:#000;">Table field</div>
<div class="f" style="left:169.2px;top:24.3px;width:132.4px;height:18.6px"></div>
<div class="t" style="left:173.4px;top:28.0px;font-size:9.60px;letter-spacing:-0.122px;color:#000;">Sample table #2, Zone #1</div>
<div class="f" style="left:309.2px;top:24.3px;width:106.0px;height:18.6px"></div>
<div class="t" style="left:313.4px;top:28.0px;font-size:9.60px;letter-spacing:-0.355px;color:#000;">By modules</div>
<div class="f" style="left:422.0px;top:24.3px;width:94.8px;height:18.6px"></div>
<div class="t" style="left:427.0px;top:28.0px;font-size:9.60px;letter-spacing:-0.372px;color:#000;">Mono 440 Wp 72 c...</div>
<div class="f" style="left:524.2px;top:24.3px;width:69.0px;height:18.6px"></div>
<div class="t" style="left:528.6px;top:28.0px;font-size:9.60px;letter-spacing:-0.397px;color:#000;">Landscape</div>
<div class="f" style="left:600.0px;top:24.3px;width:69.4px;height:18.6px"></div>
<div class="t" style="left:605.6px;top:28.0px;font-size:9.60px;letter-spacing:-0.538px;color:#000;">17</div>
<div class="f" style="left:676.7px;top:24.3px;width:69.1px;height:18.6px"></div>
<div class="t" style="left:682.2px;top:28.0px;font-size:9.60px;color:#000;">1</div>
<div class="f" style="left:753.3px;top:24.3px;width:68.9px;height:18.6px"></div>
<div class="t" style="left:757.8px;top:28.0px;font-size:9.60px;letter-spacing:-0.021px;color:#000;">0.02</div>
<div class="f" style="left:829.6px;top:24.3px;width:68.4px;height:18.6px"></div>
<div class="t" style="left:834.0px;top:28.0px;font-size:9.60px;letter-spacing:-0.021px;color:#000;">0.02</div>
<div class="t" style="left:9.2px;top:50.0px;font-size:9.60px;letter-spacing:-0.405px;color:#000;">108</div>
<svg style="left:63.8px;top:52.3px" width="13" height="8" viewBox="0 0 13 8"><rect x="0.7" y="0.8" width="11.2" height="5.6" rx="0.5" fill="#a3cdf0" stroke="#1f5be0" stroke-width="1.1"/></svg>
<div class="t" style="left:81.6px;top:50.0px;font-size:9.60px;letter-spacing:-0.257px;color:#000;">Table field</div>
<div class="f" style="left:169.2px;top:46.3px;width:132.4px;height:18.6px"></div>
<div class="t" style="left:173.4px;top:50.0px;font-size:9.60px;letter-spacing:-0.122px;color:#000;">Sample table #3, Zone #1</div>
<div class="f" style="left:309.2px;top:46.3px;width:106.0px;height:18.6px"></div>
<div class="t" style="left:313.4px;top:50.0px;font-size:9.60px;letter-spacing:-0.355px;color:#000;">By modules</div>
<div class="f" style="left:422.0px;top:46.3px;width:94.8px;height:18.6px"></div>
<div class="t" style="left:427.0px;top:50.0px;font-size:9.60px;letter-spacing:-0.372px;color:#000;">Mono 440 Wp 72 c...</div>
<div class="f" style="left:524.2px;top:46.3px;width:69.0px;height:18.6px"></div>
<div class="t" style="left:528.6px;top:50.0px;font-size:9.60px;letter-spacing:-0.397px;color:#000;">Landscape</div>
<div class="f" style="left:600.0px;top:46.3px;width:69.4px;height:18.6px"></div>
<div class="t" style="left:605.6px;top:50.0px;font-size:9.60px;letter-spacing:-0.538px;color:#000;">17</div>
<div class="f" style="left:676.7px;top:46.3px;width:69.1px;height:18.6px"></div>
<div class="t" style="left:682.2px;top:50.0px;font-size:9.60px;color:#000;">1</div>
<div class="f" style="left:753.3px;top:46.3px;width:68.9px;height:18.6px"></div>
<div class="t" style="left:757.8px;top:50.0px;font-size:9.60px;letter-spacing:-0.021px;color:#000;">0.02</div>
<div class="f" style="left:829.6px;top:46.3px;width:68.4px;height:18.6px"></div>
<div class="t" style="left:834.0px;top:50.0px;font-size:9.60px;letter-spacing:-0.021px;color:#000;">0.02</div>
<div class="t" style="left:9.2px;top:72.0px;font-size:9.60px;letter-spacing:-0.405px;color:#000;">109</div>
<svg style="left:63.8px;top:74.4px" width="13" height="8" viewBox="0 0 13 8"><rect x="0.7" y="0.8" width="11.2" height="5.6" rx="0.5" fill="#a3cdf0" stroke="#1f5be0" stroke-width="1.1"/></svg>
<div class="t" style="left:81.6px;top:72.0px;font-size:9.60px;letter-spacing:-0.257px;color:#000;">Table field</div>
<div class="f" style="left:169.2px;top:68.4px;width:132.4px;height:18.6px"></div>
<div class="t" style="left:173.4px;top:72.0px;font-size:9.60px;letter-spacing:-0.122px;color:#000;">Sample table #4, Zone #1</div>
<div class="f" style="left:309.2px;top:68.4px;width:106.0px;height:18.6px"></div>
<div class="t" style="left:313.4px;top:72.0px;font-size:9.60px;letter-spacing:-0.355px;color:#000;">By modules</div>
<div class="f" style="left:422.0px;top:68.4px;width:94.8px;height:18.6px"></div>
<div class="t" style="left:427.0px;top:72.0px;font-size:9.60px;letter-spacing:-0.372px;color:#000;">Mono 440 Wp 72 c...</div>
<div class="f" style="left:524.2px;top:68.4px;width:69.0px;height:18.6px"></div>
<div class="t" style="left:528.6px;top:72.0px;font-size:9.60px;letter-spacing:-0.397px;color:#000;">Landscape</div>
<div class="f" style="left:600.0px;top:68.4px;width:69.4px;height:18.6px"></div>
<div class="t" style="left:605.6px;top:72.0px;font-size:9.60px;letter-spacing:-0.538px;color:#000;">17</div>
<div class="f" style="left:676.7px;top:68.4px;width:69.1px;height:18.6px"></div>
<div class="t" style="left:682.2px;top:72.0px;font-size:9.60px;color:#000;">1</div>
<div class="f" style="left:753.3px;top:68.4px;width:68.9px;height:18.6px"></div>
<div class="t" style="left:757.8px;top:72.0px;font-size:9.60px;letter-spacing:-0.021px;color:#000;">0.02</div>
<div class="f" style="left:829.6px;top:68.4px;width:68.4px;height:18.6px"></div>
<div class="t" style="left:834.0px;top:72.0px;font-size:9.60px;letter-spacing:-0.021px;color:#000;">0.02</div>
<div class="t" style="left:9.2px;top:94.0px;font-size:9.60px;letter-spacing:-0.168px;color:#000;">110</div>
<svg style="left:63.8px;top:96.4px" width="13" height="8" viewBox="0 0 13 8"><rect x="0.7" y="0.8" width="11.2" height="5.6" rx="0.5" fill="#a3cdf0" stroke="#1f5be0" stroke-width="1.1"/></svg>
<div class="t" style="left:81.6px;top:94.0px;font-size:9.60px;letter-spacing:-0.257px;color:#000;">Table field</div>
<div class="f" style="left:169.2px;top:90.4px;width:132.4px;height:18.6px"></div>
<div class="t" style="left:173.4px;top:94.0px;font-size:9.60px;letter-spacing:-0.122px;color:#000;">Sample table #5, Zone #1</div>
<div class="f" style="left:309.2px;top:90.4px;width:106.0px;height:18.6px"></div>
<div class="t" style="left:313.4px;top:94.0px;font-size:9.60px;letter-spacing:-0.355px;color:#000;">By modules</div>
<div class="f" style="left:422.0px;top:90.4px;width:94.8px;height:18.6px"></div>
<div class="t" style="left:427.0px;top:94.0px;font-size:9.60px;letter-spacing:-0.372px;color:#000;">Mono 440 Wp 72 c...</div>
<div class="f" style="left:524.2px;top:90.4px;width:69.0px;height:18.6px"></div>
<div class="t" style="left:528.6px;top:94.0px;font-size:9.60px;letter-spacing:-0.397px;color:#000;">Landscape</div>
<div class="f" style="left:600.0px;top:90.4px;width:69.4px;height:18.6px"></div>
<div class="t" style="left:605.6px;top:94.0px;font-size:9.60px;letter-spacing:-0.538px;color:#000;">17</div>
<div class="f" style="left:676.7px;top:90.4px;width:69.1px;height:18.6px"></div>
<div class="t" style="left:682.2px;top:94.0px;font-size:9.60px;color:#000;">1</div>
<div class="f" style="left:753.3px;top:90.4px;width:68.9px;height:18.6px"></div>
<div class="t" style="left:757.8px;top:94.0px;font-size:9.60px;letter-spacing:-0.021px;color:#000;">0.02</div>
<div class="f" style="left:829.6px;top:90.4px;width:68.4px;height:18.6px"></div>
<div class="t" style="left:834.0px;top:94.0px;font-size:9.60px;letter-spacing:-0.021px;color:#000;">0.02</div>
<div class="t" style="left:9.2px;top:116.0px;font-size:9.60px;letter-spacing:0.070px;color:#000;">111</div>
<svg style="left:63.8px;top:118.4px" width="13" height="8" viewBox="0 0 13 8"><rect x="0.7" y="0.8" width="11.2" height="5.6" rx="0.5" fill="#a3cdf0" stroke="#1f5be0" stroke-width="1.1"/></svg>
<div class="t" style="left:81.6px;top:116.0px;font-size:9.60px;letter-spacing:-0.257px;color:#000;">Table field</div>
<div class="f" style="left:169.2px;top:112.4px;width:132.4px;height:18.6px"></div>
<div class="t" style="left:173.4px;top:116.0px;font-size:9.60px;letter-spacing:-0.122px;color:#000;">Sample table #6, Zone #1</div>
<div class="f" style="left:309.2px;top:112.4px;width:106.0px;height:18.6px"></div>
<div class="t" style="left:313.4px;top:116.0px;font-size:9.60px;letter-spacing:-0.355px;color:#000;">By modules</div>
<div class="f" style="left:422.0px;top:112.4px;width:94.8px;height:18.6px"></div>
<div class="t" style="left:427.0px;top:116.0px;font-size:9.60px;letter-spacing:-0.372px;color:#000;">Mono 440 Wp 72 c...</div>
<div class="f" style="left:524.2px;top:112.4px;width:69.0px;height:18.6px"></div>
<div class="t" style="left:528.6px;top:116.0px;font-size:9.60px;letter-spacing:-0.397px;color:#000;">Landscape</div>
<div class="f" style="left:600.0px;top:112.4px;width:69.4px;height:18.6px"></div>
<div class="t" style="left:605.6px;top:116.0px;font-size:9.60px;letter-spacing:-0.538px;color:#000;">17</div>
<div class="f" style="left:676.7px;top:112.4px;width:69.1px;height:18.6px"></div>
<div class="t" style="left:682.2px;top:116.0px;font-size:9.60px;color:#000;">1</div>
<div class="f" style="left:753.3px;top:112.4px;width:68.9px;height:18.6px"></div>
<div class="t" style="left:757.8px;top:116.0px;font-size:9.60px;letter-spacing:-0.021px;color:#000;">0.02</div>
<div class="f" style="left:829.6px;top:112.4px;width:68.4px;height:18.6px"></div>
<div class="t" style="left:834.0px;top:116.0px;font-size:9.60px;letter-spacing:-0.021px;color:#000;">0.02</div>
<div class="t" style="left:9.2px;top:138.0px;font-size:9.60px;letter-spacing:-0.168px;color:#000;">112</div>
<svg style="left:63.8px;top:140.4px" width="13" height="8" viewBox="0 0 13 8"><rect x="0.7" y="0.8" width="11.2" height="5.6" rx="0.5" fill="#a3cdf0" stroke="#1f5be0" stroke-width="1.1"/></svg>
<div class="t" style="left:81.6px;top:138.0px;font-size:9.60px;letter-spacing:-0.257px;color:#000;">Table field</div>
<div class="f" style="left:169.2px;top:134.4px;width:132.4px;height:18.6px"></div>
<div class="t" style="left:173.4px;top:138.0px;font-size:9.60px;letter-spacing:-0.122px;color:#000;">Sample table #7, Zone #1</div>
<div class="f" style="left:309.2px;top:134.4px;width:106.0px;height:18.6px"></div>
<div class="t" style="left:313.4px;top:138.0px;font-size:9.60px;letter-spacing:-0.355px;color:#000;">By modules</div>
<div class="f" style="left:422.0px;top:134.4px;width:94.8px;height:18.6px"></div>
<div class="t" style="left:427.0px;top:138.0px;font-size:9.60px;letter-spacing:-0.372px;color:#000;">Mono 440 Wp 72 c...</div>
<div class="f" style="left:524.2px;top:134.4px;width:69.0px;height:18.6px"></div>
<div class="t" style="left:528.6px;top:138.0px;font-size:9.60px;letter-spacing:-0.397px;color:#000;">Landscape</div>
<div class="f" style="left:600.0px;top:134.4px;width:69.4px;height:18.6px"></div>
<div class="t" style="left:605.6px;top:138.0px;font-size:9.60px;letter-spacing:-0.538px;color:#000;">17</div>
<div class="f" style="left:676.7px;top:134.4px;width:69.1px;height:18.6px"></div>
<div class="t" style="left:682.2px;top:138.0px;font-size:9.60px;color:#000;">1</div>
<div class="f" style="left:753.3px;top:134.4px;width:68.9px;height:18.6px"></div>
<div class="t" style="left:757.8px;top:138.0px;font-size:9.60px;letter-spacing:-0.021px;color:#000;">0.02</div>
<div class="f" style="left:829.6px;top:134.4px;width:68.4px;height:18.6px"></div>
<div class="t" style="left:834.0px;top:138.0px;font-size:9.60px;letter-spacing:-0.021px;color:#000;">0.02</div>
<div class="t" style="left:9.2px;top:160.0px;font-size:9.60px;letter-spacing:-0.168px;color:#000;">113</div>
<svg style="left:63.8px;top:162.4px" width="13" height="8" viewBox="0 0 13 8"><rect x="0.7" y="0.8" width="11.2" height="5.6" rx="0.5" fill="#a3cdf0" stroke="#1f5be0" stroke-width="1.1"/></svg>
<div class="t" style="left:81.6px;top:160.0px;font-size:9.60px;letter-spacing:-0.257px;color:#000;">Table field</div>
<div class="f" style="left:169.2px;top:156.4px;width:132.4px;height:18.6px"></div>
<div class="t" style="left:173.4px;top:160.0px;font-size:9.60px;letter-spacing:-0.122px;color:#000;">Sample table #8, Zone #1</div>
<div class="f" style="left:309.2px;top:156.4px;width:106.0px;height:18.6px"></div>
<div class="t" style="left:313.4px;top:160.0px;font-size:9.60px;letter-spacing:-0.355px;color:#000;">By modules</div>
<div class="f" style="left:422.0px;top:156.4px;width:94.8px;height:18.6px"></div>
<div class="t" style="left:427.0px;top:160.0px;font-size:9.60px;letter-spacing:-0.372px;color:#000;">Mono 440 Wp 72 c...</div>
<div class="f" style="left:524.2px;top:156.4px;width:69.0px;height:18.6px"></div>
<div class="t" style="left:528.6px;top:160.0px;font-size:9.60px;letter-spacing:-0.397px;color:#000;">Landscape</div>
<div class="f" style="left:600.0px;top:156.4px;width:69.4px;height:18.6px"></div>
<div class="t" style="left:605.6px;top:160.0px;font-size:9.60px;letter-spacing:-0.538px;color:#000;">17</div>
<div class="f" style="left:676.7px;top:156.4px;width:69.1px;height:18.6px"></div>
<div class="t" style="left:682.2px;top:160.0px;font-size:9.60px;color:#000;">1</div>
<div class="f" style="left:753.3px;top:156.4px;width:68.9px;height:18.6px"></div>
<div class="t" style="left:757.8px;top:160.0px;font-size:9.60px;letter-spacing:-0.021px;color:#000;">0.02</div>
<div class="f" style="left:829.6px;top:156.4px;width:68.4px;height:18.6px"></div>
<div class="t" style="left:834.0px;top:160.0px;font-size:9.60px;letter-spacing:-0.021px;color:#000;">0.02</div>
<div class="t" style="left:9.2px;top:182.0px;font-size:9.60px;letter-spacing:-0.168px;color:#000;">114</div>
<svg style="left:63.8px;top:184.5px" width="13" height="8" viewBox="0 0 13 8"><rect x="0.7" y="0.8" width="11.2" height="5.6" rx="0.5" fill="#a3cdf0" stroke="#1f5be0" stroke-width="1.1"/></svg>
<div class="t" style="left:81.6px;top:182.0px;font-size:9.60px;letter-spacing:-0.257px;color:#000;">Table field</div>
<div class="f" style="left:169.2px;top:178.5px;width:132.4px;height:18.6px"></div>
<div class="t" style="left:173.4px;top:182.0px;font-size:9.60px;letter-spacing:-0.122px;color:#000;">Sample table #9, Zone #1</div>
<div class="f" style="left:309.2px;top:178.5px;width:106.0px;height:18.6px"></div>
<div class="t" style="left:313.4px;top:182.0px;font-size:9.60px;letter-spacing:-0.355px;color:#000;">By modules</div>
<div class="f" style="left:422.0px;top:178.5px;width:94.8px;height:18.6px"></div>
<div class="t" style="left:427.0px;top:182.0px;font-size:9.60px;letter-spacing:-0.372px;color:#000;">Mono 440 Wp 72 c...</div>
<div class="f" style="left:524.2px;top:178.5px;width:69.0px;height:18.6px"></div>
<div class="t" style="left:528.6px;top:182.0px;font-size:9.60px;letter-spacing:-0.397px;color:#000;">Landscape</div>
<div class="f" style="left:600.0px;top:178.5px;width:69.4px;height:18.6px"></div>
<div class="t" style="left:605.6px;top:182.0px;font-size:9.60px;letter-spacing:-0.538px;color:#000;">17</div>
<div class="f" style="left:676.7px;top:178.5px;width:69.1px;height:18.6px"></div>
<div class="t" style="left:682.2px;top:182.0px;font-size:9.60px;color:#000;">1</div>
<div class="f" style="left:753.3px;top:178.5px;width:68.9px;height:18.6px"></div>
<div class="t" style="left:757.8px;top:182.0px;font-size:9.60px;letter-spacing:-0.021px;color:#000;">0.02</div>
<div class="f" style="left:829.6px;top:178.5px;width:68.4px;height:18.6px"></div>
<div class="t" style="left:834.0px;top:182.0px;font-size:9.60px;letter-spacing:-0.021px;color:#000;">0.02</div>
<div class="t" style="left:9.2px;top:204.0px;font-size:9.60px;letter-spacing:-0.168px;color:#000;">115</div>
<svg style="left:63.8px;top:206.5px" width="13" height="8" viewBox="0 0 13 8"><rect x="0.7" y="0.8" width="11.2" height="5.6" rx="0.5" fill="#a3cdf0" stroke="#1f5be0" stroke-width="1.1"/></svg>
<div class="t" style="left:81.6px;top:204.0px;font-size:9.60px;letter-spacing:-0.257px;color:#000;">Table field</div>
<div class="f" style="left:169.2px;top:200.5px;width:132.4px;height:18.6px"></div>
<div class="t" style="left:173.4px;top:204.0px;font-size:9.60px;letter-spacing:-0.107px;color:#000;">Sample table #10, Zone #1</div>
<div class="f" style="left:309.2px;top:200.5px;width:106.0px;height:18.6px"></div>
<div class="t" style="left:313.4px;top:204.0px;font-size:9.60px;letter-spacing:-0.355px;color:#000;">By modules</div>
<div class="f" style="left:422.0px;top:200.5px;width:94.8px;height:18.6px"></div>
<div class="t" style="left:427.0px;top:204.0px;font-size:9.60px;letter-spacing:-0.372px;color:#000;">Mono 440 Wp 72 c...</div>
<div class="f" style="left:524.2px;top:200.5px;width:69.0px;height:18.6px"></div>
<div class="t" style="left:528.6px;top:204.0px;font-size:9.60px;letter-spacing:-0.397px;color:#000;">Landscape</div>
<div class="f" style="left:600.0px;top:200.5px;width:69.4px;height:18.6px"></div>
<div class="t" style="left:605.6px;top:204.0px;font-size:9.60px;letter-spacing:-0.538px;color:#000;">17</div>
<div class="f" style="left:676.7px;top:200.5px;width:69.1px;height:18.6px"></div>
<div class="t" style="left:682.2px;top:204.0px;font-size:9.60px;color:#000;">1</div>
<div class="f" style="left:753.3px;top:200.5px;width:68.9px;height:18.6px"></div>
<div class="t" style="left:757.8px;top:204.0px;font-size:9.60px;letter-spacing:-0.021px;color:#000;">0.02</div>
<div class="f" style="left:829.6px;top:200.5px;width:68.4px;height:18.6px"></div>
<div class="t" style="left:834.0px;top:204.0px;font-size:9.60px;letter-spacing:-0.021px;color:#000;">0.02</div>
<div class="t" style="left:9.2px;top:226.0px;font-size:9.60px;letter-spacing:-0.168px;color:#000;">116</div>
<svg style="left:63.8px;top:228.5px" width="13" height="8" viewBox="0 0 13 8"><rect x="0.7" y="0.8" width="11.2" height="5.6" rx="0.5" fill="#a3cdf0" stroke="#1f5be0" stroke-width="1.1"/></svg>
<div class="t" style="left:81.6px;top:226.0px;font-size:9.60px;letter-spacing:-0.257px;color:#000;">Table field</div>
<div class="f" style="left:169.2px;top:222.5px;width:132.4px;height:18.6px"></div>
<div class="t" style="left:173.4px;top:226.0px;font-size:9.60px;letter-spacing:-0.078px;color:#000;">Sample table #11, Zone #1</div>
<div class="f" style="left:309.2px;top:222.5px;width:106.0px;height:18.6px"></div>
<div class="t" style="left:313.4px;top:226.0px;font-size:9.60px;letter-spacing:-0.355px;color:#000;">By modules</div>
<div class="f" style="left:422.0px;top:222.5px;width:94.8px;height:18.6px"></div>
<div class="t" style="left:427.0px;top:226.0px;font-size:9.60px;letter-spacing:-0.372px;color:#000;">Mono 440 Wp 72 c...</div>
<div class="f" style="left:524.2px;top:222.5px;width:69.0px;height:18.6px"></div>
<div class="t" style="left:528.6px;top:226.0px;font-size:9.60px;letter-spacing:-0.397px;color:#000;">Landscape</div>
<div class="f" style="left:600.0px;top:222.5px;width:69.4px;height:18.6px"></div>
<div class="t" style="left:605.6px;top:226.0px;font-size:9.60px;letter-spacing:-0.538px;color:#000;">17</div>
<div class="f" style="left:676.7px;top:222.5px;width:69.1px;height:18.6px"></div>
<div class="t" style="left:682.2px;top:226.0px;font-size:9.60px;color:#000;">1</div>
<div class="f" style="left:753.3px;top:222.5px;width:68.9px;height:18.6px"></div>
<div class="t" style="left:757.8px;top:226.0px;font-size:9.60px;letter-spacing:-0.021px;color:#000;">0.02</div>
<div class="f" style="left:829.6px;top:222.5px;width:68.4px;height:18.6px"></div>
<div class="t" style="left:834.0px;top:226.0px;font-size:9.60px;letter-spacing:-0.021px;color:#000;">0.02</div>
<div class="t" style="left:9.2px;top:248.0px;font-size:9.60px;letter-spacing:-0.168px;color:#000;">117</div>
<svg style="left:63.8px;top:250.5px" width="13" height="8" viewBox="0 0 13 8"><rect x="0.7" y="0.8" width="11.2" height="5.6" rx="0.5" fill="#a3cdf0" stroke="#1f5be0" stroke-width="1.1"/></svg>
<div class="t" style="left:81.6px;top:248.0px;font-size:9.60px;letter-spacing:-0.257px;color:#000;">Table field</div>
<div class="f" style="left:169.2px;top:244.5px;width:132.4px;height:18.6px"></div>
<div class="t" style="left:173.4px;top:248.0px;font-size:9.60px;letter-spacing:-0.107px;color:#000;">Sample table #12, Zone #1</div>
<div class="f" style="left:309.2px;top:244.5px;width:106.0px;height:18.6px"></div>
<div class="t" style="left:313.4px;top:248.0px;font-size:9.60px;letter-spacing:-0.355px;color:#000;">By modules</div>
<div class="f" style="left:422.0px;top:244.5px;width:94.8px;height:18.6px"></div>
<div class="t" style="left:427.0px;top:248.0px;font-size:9.60px;letter-spacing:-0.372px;color:#000;">Mono 440 Wp 72 c...</div>
<div class="f" style="left:524.2px;top:244.5px;width:69.0px;height:18.6px"></div>
<div class="t" style="left:528.6px;top:248.0px;font-size:9.60px;letter-spacing:-0.397px;color:#000;">Landscape</div>
<div class="f" style="left:600.0px;top:244.5px;width:69.4px;height:18.6px"></div>
<div class="t" style="left:605.6px;top:248.0px;font-size:9.60px;letter-spacing:-0.538px;color:#000;">17</div>
<div class="f" style="left:676.7px;top:244.5px;width:69.1px;height:18.6px"></div>
<div class="t" style="left:682.2px;top:248.0px;font-size:9.60px;color:#000;">1</div>
<div class="f" style="left:753.3px;top:244.5px;width:68.9px;height:18.6px"></div>
<div class="t" style="left:757.8px;top:248.0px;font-size:9.60px;letter-spacing:-0.021px;color:#000;">0.02</div>
<div class="f" style="left:829.6px;top:244.5px;width:68.4px;height:18.6px"></div>
<div class="t" style="left:834.0px;top:248.0px;font-size:9.60px;letter-spacing:-0.021px;color:#000;">0.02</div>
</div>
<div class="abs" style="left:387px;top:266px;width:114px;height:22px;background:#fff;"></div>
<div class="abs" style="left:390.6px;top:268.1px;width:106.8px;height:19.4px;background:#fff;border:2px solid #2b5aab;border-radius:3px"></div>
<div class="abs" style="left:393.6px;top:271px;width:87.4px;height:13.2px;background:#0078d7;outline:1px dotted #d08a3c;outline-offset:-1px"></div>
<div class="t" style="left:394.6px;top:272.0px;font-size:9.60px;letter-spacing:-0.395px;color:#fff;">By modules</div>
<svg style="left:484.2px;top:275.0px" width="7.8" height="5" viewBox="0 0 7.8 5"><path d="M0.3 0.2 L3.9 4.3 L7.5 0.2" stroke="#6c6c6c" stroke-width="1.2" fill="none"/></svg>
<div class="abs" style="left:391px;top:287.6px;width:106.4px;height:30.2px;background:#fff;border:1px solid #6e6e6e;border-top-color:#222;box-shadow:1.5px 1.5px 2px rgba(0,0,0,.45)"></div>
<div class="abs" style="left:392px;top:288.4px;width:104.4px;height:13.8px;background:#0078d7;outline:1px dotted #c9863e;outline-offset:-1px"></div>
<div class="t" style="left:393.2px;top:290.0px;font-size:9.60px;letter-spacing:-0.395px;color:#fff;">By modules</div>
<div class="t" style="left:393.2px;top:304.0px;font-size:9.60px;letter-spacing:-0.287px;color:#000;">By sensitive sizes</div>
<svg style="left:491.1px;top:274.6px" width="10.8" height="16.6" viewBox="0 0 11 18"><path d="M0.6 0.6 L0.6 15 L3.9 12 L6.3 17.4 L8.5 16.4 L6.1 11.2 L10.4 11.2 Z" fill="#fff" stroke="#333" stroke-width="0.95" stroke-linejoin="miter"/></svg>
<div class="abs" style="left:947px;top:266px;width:14px;height:255px;background:#f0f0f0;"></div>
<svg style="left:950.9px;top:272.0px" width="5.6" height="3.6" viewBox="0 0 5.6 3.6"><path d="M0.3 3.1 L2.8 0.4 L5.3 3.1" stroke="#9a9a9a" stroke-width="1.2" fill="none"/></svg>
<div class="abs" style="left:947.7px;top:281px;width:12.2px;height:40.6px;background:#c6c6c6;"></div>
<svg style="left:950.9px;top:512.0px" width="5.6" height="3.6" viewBox="0 0 5.6 3.6"><path d="M0.3 0.2 L2.8 2.9 L5.3 0.2" stroke="#8a8a8a" stroke-width="1.2" fill="none"/></svg>
<div class="abs" style="left:82px;top:521px;width:879px;height:13.8px;background:#f0f0f0;"></div>
<div class="abs" style="left:96.6px;top:521.6px;width:800.4px;height:12.9px;background:#c6c6c6;"></div>
<svg style="left:88.0px;top:524.6px" width="3.9" height="6.4" viewBox="0 0 3.9 6.4"><path d="M3.4 0.3 L0.4 3.2 L3.4 6.1" stroke="#9a9a9a" stroke-width="1.2" fill="none"/></svg>
<svg style="left:937.6px;top:524.6px" width="3.9" height="6.4" viewBox="0 0 3.9 6.4"><path d="M0.2 0.3 L3.2 3.2 L0.2 6.1" stroke="#9a9a9a" stroke-width="1.2" fill="none"/></svg>
<div class="t" style="left:80.0px;top:543.0px;font-size:9.60px;letter-spacing:-0.188px;color:#000;">63 objects selected</div>
<div class="btn" style="left:80.6px;top:558.4px;width:104px;height:31px"></div>
<svg style="left:109.4px;top:565.0px" width="17.6" height="18" viewBox="0 0 17.6 18"><path d="M0.4 0.4 H9.6 L15 5.8 V17.6 H0.4 Z" fill="#fbfbfb"/><path d="M9.6 0.4 L15 5.8 H9.6 Z" fill="#d9d9d9"/><path d="M8.6 9.2 H12.4 V6.8 L18 11.8 L12.4 16.8 V14.4 H8.6 Z" fill="#cc0a0e"/></svg>
<div class="t" style="left:130.0px;top:570.0px;font-size:9.60px;letter-spacing:-0.057px;color:#000;">Export</div>
<div class="btn" style="left:844.4px;top:558.4px;width:117.6px;height:31px"></div>
<svg style="left:882.0px;top:566.0px" width="16.6" height="16.6" viewBox="0 0 16.6 16.6"><path d="M5.1 4.4 V0.8 H15.2 V15.8 H5.1 V11.6" fill="none" stroke="#222" stroke-width="1.5"/><path d="M0 8.3 H8" stroke="#79b747" stroke-width="1.3"/><path d="M7.2 5 L13.2 8.3 L7.2 11.6 Z" fill="#79b747"/></svg>
<div class="t" style="left:904.0px;top:570.0px;font-size:9.60px;letter-spacing:-0.589px;color:#000;">Close</div>
</body>
</html>
